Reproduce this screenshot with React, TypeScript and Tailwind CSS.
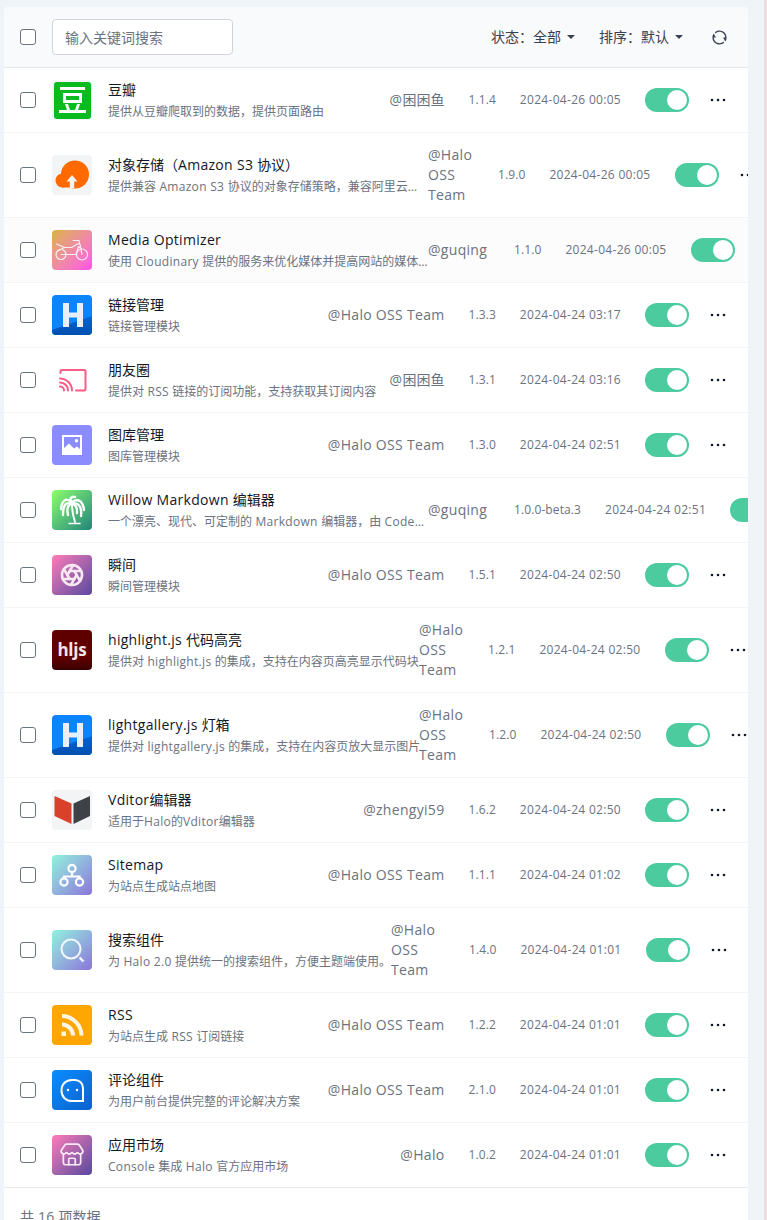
import type { ReactNode } from "react";
import { Aperture, Store } from "lucide-react";
import { RiRefreshLine } from "react-icons/ri";

type Plugin = {
  name: string;
  desc: string;
  author: string;
  version: string;
  date: string;
  logo: ReactNode;
  // only the rows where the author column squeezes things have these
  startClass?: string;
  textClass?: string;
  authorClass?: string;
  hover?: boolean;
};

function Tile({ className, children }: { className: string; children: ReactNode }) {
  return (
    <div className={`flex size-10 flex-none items-center justify-center overflow-hidden rounded-[4px] ${className}`}>
      {children}
    </div>
  );
}

function DoubanLogo() {
  return (
    <Tile className="bg-[#f3f4f6]">
      <svg viewBox="0 0 37 37" className="size-[37px]">
        <rect width="37" height="37" rx="3" fill="#09bb1f" />
        <g fill="#fff">
          <rect x="6" y="5" width="25" height="3" />
          <rect x="9" y="11" width="19" height="10" />
          <rect x="5" y="28" width="27" height="3" />
          <path d="M11 22h3l2 6h-3zM23 22h3l-2 6h-3z" />
        </g>
        <rect x="12" y="14" width="13" height="4" fill="#09bb1f" />
      </svg>
    </Tile>
  );
}

function CloudLogo() {
  return (
    <Tile className="bg-[#f3f4f6]">
      <svg viewBox="0 0 40 40" className="size-10">
        <g fill="#ff6a00">
          <circle cx="23" cy="19.500" r="14" />
          <circle cx="10.500" cy="25.500" r="7" />
          <rect x="10" y="24" width="18" height="8.500" />
        </g>
        <path d="M20 20l-5.500 6.500h3.300v6.500h4.400v-6.500h3.300z" fill="#f3f4f6" />
      </svg>
    </Tile>
  );
}

function BikeLogo() {
  return (
    <Tile className="bg-gradient-to-br from-[#dcb136] to-[#ff4de6]">
      <svg viewBox="0 0 40 40" className="size-10" fill="none" stroke="#fdeef6" strokeWidth="1.200" strokeLinecap="round" strokeLinejoin="round">
        <circle cx="9" cy="24.500" r="5" />
        <circle cx="30" cy="24.500" r="5.500" />
        <path d="M4.500 14l8 3.500h7l6-3.500h2.500l2 10.500M9 24.500h15l2.500-8 3 2.500M12.500 17.500L5.500 21M21 10.500h6l.5 3.500" />
      </svg>
    </Tile>
  );
}

function HaloLogo() {
  return (
    <Tile className="bg-[#0a84ff]">
      <svg viewBox="0 0 40 40" className="size-10">
        <defs>
          <linearGradient id="haloWedge" x1="0" y1="0" x2="0" y2="1">
            <stop offset="0" stopColor="#0066d6" />
            <stop offset="1" stopColor="#004fae" />
          </linearGradient>
        </defs>
        <path d="M0 40V35L40 21V40z" fill="url(#haloWedge)" />
        <path d="M11 8h6v9.500h8V8h6v24h-6V22.500h-8V32h-6z" fill="#e9eff7" />
      </svg>
    </Tile>
  );
}

function MomentsLogo() {
  return (
    <Tile className="bg-white">
      <svg viewBox="0 0 40 40" className="size-10" fill="none" stroke="#fb5c86" strokeWidth="2" strokeLinecap="round">
        <path d="M8.500 13v-1.500A1.500 1.500 0 0 1 10 10h22a1.500 1.500 0 0 1 1.500 1.500V29a1.500 1.500 0 0 1-1.500 1.500h-8" />
        <path d="M8 18.500c6.500 0 12 5.500 12 12M8 22.500c4.500 0 8 3.500 8 8M8 26.500c2.200 0 4 1.800 4 4" />
      </svg>
    </Tile>
  );
}

function GalleryLogo() {
  return (
    <Tile className="bg-[#8b8cff]">
      <svg viewBox="0 0 40 40" className="size-10" fill="none">
        <rect x="11" y="11" width="18" height="18" stroke="#fff" strokeWidth="2" />
        <path d="M11 24l6-5.500 5 5 3-2 4 3.500v4H11z" fill="#fff" />
        <circle cx="24.500" cy="15.800" r="1.700" fill="#fff" />
      </svg>
    </Tile>
  );
}

function WillowLogo() {
  return (
    <Tile className="bg-gradient-to-br from-[#8cff66] to-[#1f8578]">
      <svg viewBox="0 0 40 40" className="size-10" fill="none" stroke="#fff" strokeLinecap="round">
        <g strokeWidth="2.400" strokeDasharray="2.200 0.700">
          <path d="M20 12C15 8 10 9 9 19" />
          <path d="M20 13C14 12 11 15 11 25" />
          <path d="M20 12C17 9 19 6 23 7" />
          <path d="M20 12C26 8 31 11 32 20" />
          <path d="M20 13C27 13 30 17 29 26" />
          <path d="M19 14C15 16 15 20 16 25" />
          <path d="M21 14C25 16 25 19 25 23" />
        </g>
        <path d="M20 14C20 20 21 26 23 32" strokeWidth="2" />
        <path d="M17 33.500h11" strokeWidth="1.600" />
      </svg>
    </Tile>
  );
}

function ApertureLogo() {
  return (
    <Tile className="bg-gradient-to-br from-[#ff7bb8] to-[#58479e]">
      <Aperture className="size-6 text-[#f8e9f2]" strokeWidth={2.6} />
    </Tile>
  );
}

function HljsLogo() {
  return (
    <Tile className="bg-gradient-to-b from-[#5f0000] from-70% to-[#3a0000]">
      <span className="text-[17px] font-bold tracking-[-0.2px] text-[#f3e6e6]">hljs</span>
    </Tile>
  );
}

function VditorLogo() {
  return (
    <Tile className="bg-[#f3f4f6]">
      <svg viewBox="0 0 40 40" className="size-10">
        <path d="M2.500 6l17 7.500V34l-17-8z" fill="#d9412b" />
        <path d="M38 6l-16.500 7.500V34L38 26z" fill="#3e4146" />
      </svg>
    </Tile>
  );
}

function SitemapLogo() {
  return (
    <Tile className="bg-gradient-to-br from-[#8ff2dc] to-[#8a74d8]">
      <svg viewBox="0 0 40 40" className="size-10" fill="none" stroke="#fff" strokeWidth="2.200">
        <circle cx="20" cy="13.500" r="3.600" />
        <circle cx="12" cy="27" r="3.600" />
        <circle cx="27.500" cy="27" r="3.600" />
        <path d="M20 17v4.500M12 23.500v-2h15.500v2" />
      </svg>
    </Tile>
  );
}

function SearchLogo() {
  return (
    <Tile className="bg-gradient-to-br from-[#8ff2dc] to-[#8a74d8]">
      <svg viewBox="0 0 40 40" className="size-10" fill="none" stroke="#f4f8fc" strokeWidth="2">
        <circle cx="19" cy="19" r="9.500" />
        <path d="M27.500 27.500l4 4" strokeWidth="2.400" />
      </svg>
    </Tile>
  );
}

function RssLogo() {
  return (
    <Tile className="bg-[#ffa600]">
      <svg viewBox="0 0 40 40" className="size-10" fill="none" stroke="#fdf6e8" strokeWidth="4">
        <path d="M10 11c10.500 0 19.500 9 19.500 19.500M10 19.500c6 0 11 5 11 11" />
        <rect x="9.500" y="26.500" width="4.500" height="4.500" fill="#fdf6e8" stroke="none" />
      </svg>
    </Tile>
  );
}

function CommentLogo() {
  return (
    <Tile className="bg-gradient-to-br from-[#0a8dff] to-[#0b62cc]">
      <svg viewBox="0 0 40 40" className="size-10" fill="none" stroke="#fff" strokeWidth="2">
        <path d="M20 10h3c4.500 0 8 3.500 8 8v13H20c-6 0-10.500-4-10.500-10.500S14 10 20 10z" />
        <circle cx="16" cy="20" r="1.200" fill="#fff" stroke="none" />
        <circle cx="25" cy="20" r="1.200" fill="#fff" stroke="none" />
      </svg>
    </Tile>
  );
}

function MarketLogo() {
  return (
    <Tile className="bg-gradient-to-br from-[#ff7bb8] to-[#58479e]">
      <Store className="size-[26px] text-[#f8e9f2]" strokeWidth={1.6} />
    </Tile>
  );
}

const plugins: Plugin[] = [
  { name: "豆瓣", desc: "提供从豆瓣爬取到的数据，提供页面路由", author: "@困困鱼", version: "1.1.4", date: "2024-04-26 00:05", logo: <DoubanLogo /> },
  {
    name: "对象存储（Amazon S3 协议）",
    desc: "提供兼容 Amazon S3 协议的对象存储策略，兼容阿里云、腾讯云、七牛云等",
    author: "@Halo OSS Team",
    version: "1.9.0",
    date: "2024-04-26 00:05",
    logo: <CloudLogo />,
    startClass: "w-[408px] flex-none",
    authorClass: "w-[46px]",
  },
  {
    name: "Media Optimizer",
    desc: "使用 Cloudinary 提供的服务来优化媒体并提高网站的媒体加载速度和性能",
    author: "@guqing",
    version: "1.1.0",
    date: "2024-04-26 00:05",
    logo: <BikeLogo />,
    startClass: "w-[408px] flex-none",
    authorClass: "w-[62px]",
    hover: true,
  },
  { name: "链接管理", desc: "链接管理模块", author: "@Halo OSS Team", version: "1.3.3", date: "2024-04-24 03:17", logo: <HaloLogo /> },
  { name: "朋友圈", desc: "提供对 RSS 链接的订阅功能，支持获取其订阅内容", author: "@困困鱼", version: "1.3.1", date: "2024-04-24 03:16", logo: <MomentsLogo /> },
  { name: "图库管理", desc: "图库管理模块", author: "@Halo OSS Team", version: "1.3.0", date: "2024-04-24 02:51", logo: <GalleryLogo /> },
  {
    name: "Willow Markdown 编辑器",
    desc: "一个漂亮、现代、可定制的 Markdown 编辑器，由 CodeMirror 驱动，支持实时预览",
    author: "@guqing",
    version: "1.0.0-beta.3",
    date: "2024-04-24 02:51",
    logo: <WillowLogo />,
    startClass: "w-[408px] flex-none",
    authorClass: "w-[62px]",
  },
  { name: "瞬间", desc: "瞬间管理模块", author: "@Halo OSS Team", version: "1.5.1", date: "2024-04-24 02:50", logo: <ApertureLogo /> },
  {
    name: "highlight.js 代码高亮",
    desc: "提供对 highlight.js 的集成，支持在内容页高亮显示代码块",
    author: "@Halo OSS Team",
    version: "1.2.1",
    date: "2024-04-24 02:50",
    logo: <HljsLogo />,
    startClass: "w-[399px] flex-none",
    textClass: "-mr-1",
    authorClass: "w-[45px]",
  },
  {
    name: "lightgallery.js 灯箱",
    desc: "提供对 lightgallery.js 的集成，支持在内容页放大显示图片",
    author: "@Halo OSS Team",
    version: "1.2.0",
    date: "2024-04-24 02:50",
    logo: <HaloLogo />,
    startClass: "w-[399px] flex-none",
    textClass: "-mr-1",
    authorClass: "w-[46px]",
  },
  { name: "Vditor编辑器", desc: "适用于Halo的Vditor编辑器", author: "@zhengyi59", version: "1.6.2", date: "2024-04-24 02:50", logo: <VditorLogo /> },
  { name: "Sitemap", desc: "为站点生成站点地图", author: "@Halo OSS Team", version: "1.1.1", date: "2024-04-24 01:02", logo: <SitemapLogo /> },
  {
    name: "搜索组件",
    desc: "为 Halo 2.0 提供统一的搜索组件，方便主题端使用。",
    author: "@Halo OSS Team",
    version: "1.4.0",
    date: "2024-04-24 01:01",
    logo: <SearchLogo />,
    startClass: "w-[371px] flex-none",
    textClass: "-mr-1",
    authorClass: "w-[54px]",
  },
  { name: "RSS", desc: "为站点生成 RSS 订阅链接", author: "@Halo OSS Team", version: "1.2.2", date: "2024-04-24 01:01", logo: <RssLogo /> },
  { name: "评论组件", desc: "为用户前台提供完整的评论解决方案", author: "@Halo OSS Team", version: "2.1.0", date: "2024-04-24 01:01", logo: <CommentLogo /> },
  { name: "应用市场", desc: "Console 集成 Halo 官方应用市场", author: "@Halo", version: "1.0.2", date: "2024-04-24 01:01", logo: <MarketLogo /> },
];

// latin runs sit a little wider than the font gives, the CJK ones must stay on their grid
function Mixed({ text }: { text: string }) {
  return (
    <>
      {text.split(/([\x20-\x7e]+)/).map((part, i) =>
        i % 2 === 1 ? (
          <span key={i} className="tracking-[0.3px]">
            {part}
          </span>
        ) : (
          part
        ),
      )}
    </>
  );
}

function Checkbox() {
  return <input type="checkbox" className="size-4 flex-none appearance-none rounded-[3px] border border-[#6b7280] bg-white" />;
}

function Filter({ label, value }: { label: string; value: string }) {
  return (
    <div className="flex items-center text-sm text-[#374151]">
      <span>{label}：</span>
      <span>{value}</span>
      <svg viewBox="0 0 8 4" className="ml-1.5 h-1 w-2 fill-[#374151]">
        <path d="M0 0h8L4 4z" />
      </svg>
    </div>
  );
}

function PluginRow({ plugin, last }: { plugin: Plugin; last: boolean }) {
  return (
    <li
      className={`flex items-center border-b py-3 pl-4 pr-[22px] ${last ? "border-[#e5e7eb]" : "border-[#f3f4f6]"} ${plugin.hover ? "bg-[#fcfcfc]" : "bg-white"}`}
    >
      <div className={`flex min-w-0 items-center ${plugin.startClass ?? "flex-1"}`}>
        <Checkbox />
        <div className="ml-4 flex-none">{plugin.logo}</div>
        <div className={`ml-4 min-w-0 ${plugin.textClass ?? ""}`}>
          <div className="truncate text-sm text-[#111827]">
            <Mixed text={plugin.name} />
          </div>
          <div className="mt-1 truncate text-xs text-[#6b7280]">
            <Mixed text={plugin.desc} />
          </div>
        </div>
      </div>
      <div className="flex flex-none items-center">
        <div className={`text-sm text-[#6b7280] ${plugin.authorClass ?? "whitespace-nowrap"}`}>
          <Mixed text={plugin.author} />
        </div>
        <div className="ml-6 whitespace-nowrap text-xs tracking-[0.1px] text-[#6b7280]">{plugin.version}</div>
        <div className="ml-6 whitespace-nowrap text-xs tracking-[0.3px] text-[#6b7280]">{plugin.date}</div>
        <div className="ml-6 flex h-6 w-11 items-center justify-end rounded-full bg-[#4ccb9f] pr-0.5">
          <div className="size-5 rounded-full bg-white" />
        </div>
        <svg viewBox="0 0 16 16" className="ml-[21px] size-4 fill-[#111827]">
          <circle cx="2" cy="8" r="1.300" />
          <circle cx="8" cy="8" r="1.300" />
          <circle cx="14" cy="8" r="1.300" />
        </svg>
      </div>
    </li>
  );
}

export default function App() {
  return (
    <div className="h-screen overflow-hidden border-r-[3px] border-[#ecdfdf] bg-[#eff4f9] pl-1 pt-[7px] font-['Open_Sans','Noto_Sans_CJK_SC',sans-serif]">
      <div className="w-[744px] overflow-hidden rounded-[4px] bg-white">
        <div className="flex h-[61px] items-center border-b border-[#e5e7eb] bg-[#f9fafb] px-4">
          <Checkbox />
          <input
            placeholder="输入关键词搜索"
            className="ml-4 h-9 w-[181px] rounded-[4px] border border-[#d1d5db] bg-white px-3 text-sm outline-none placeholder:text-[#6b7280]"
          />
          <div className="ml-auto flex items-center gap-6 pr-1">
            <Filter label="状态" value="全部" />
            <Filter label="排序" value="默认" />
            <RiRefreshLine className="ml-1 size-[17px] text-[#374151]" />
          </div>
        </div>
        <ul>
          {plugins.map((p, i) => (
            <PluginRow key={p.name} plugin={p} last={i === plugins.length - 1} />
          ))}
        </ul>
        <div className="px-4 pb-4 pt-[19px] text-sm text-[#6b7280]">
          <Mixed text="共 16 项数据" />
        </div>
      </div>
    </div>
  );
}
